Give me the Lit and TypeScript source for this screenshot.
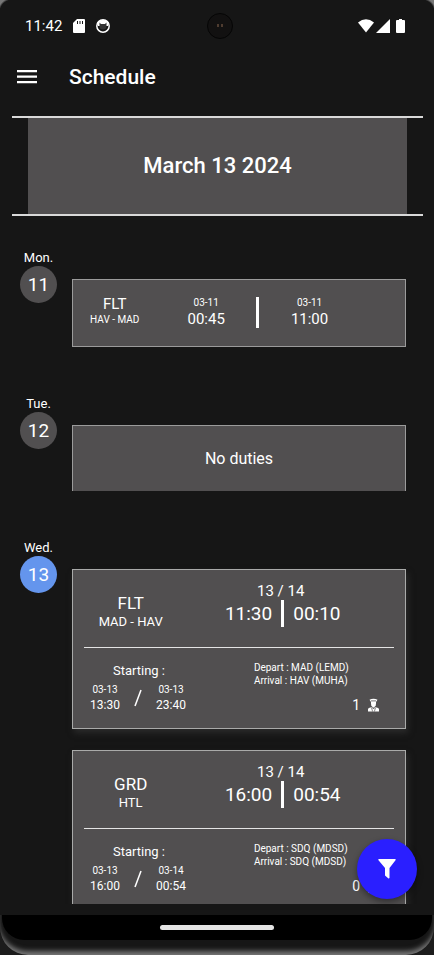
import { LitElement, html, css } from "lit";
import { customElement, property } from "lit/decorators.js";

interface Leg {
  date: string;
  time: string;
}

interface Duty {
  kind: string;
  route: string;
  days: string;
  from: string;
  to: string;
  start: Leg;
  end: Leg;
  depart: string;
  arrival: string;
  crew: number;
}

const DUTIES: Duty[] = [
  {
    kind: "FLT", route: "MAD - HAV", days: "13 / 14", from: "11:30", to: "00:10",
    start: { date: "03-13", time: "13:30" }, end: { date: "03-13", time: "23:40" },
    depart: "MAD (LEMD)", arrival: "HAV (MUHA)", crew: 1,
  },
  {
    kind: "GRD", route: "HTL", days: "13 / 14", from: "16:00", to: "00:54",
    start: { date: "03-13", time: "16:00" }, end: { date: "03-14", time: "00:54" },
    depart: "SDQ (MDSD)", arrival: "SDQ (MDSD)", crew: 0,
  },
];

@customElement("duty-card")
class DutyCard extends LitElement {
  @property({ attribute: false }) duty!: Duty;

  static styles = css`
    :host {
      display: block;
      box-sizing: border-box;
      height: 160px;
      padding: 0 11px;
      background: #514f50;
      border: 1px solid #a9aaa9;
      box-shadow: 2px 4px 6px #2a2a2a;
    }
    .head {
      display: grid;
      grid-template-columns: 94fr 212fr 6fr;
      height: 78px;
      box-sizing: border-box;
      border-bottom: 1px solid #e4e4e4;
      text-align: center;
    }
    .what { padding-top: 23px; }
    .kind { font-size: 17px; line-height: 20px; }
    .route { font-size: 13px; line-height: 18px; }
    .when { padding-top: 12px; }
    .days { font-size: 15px; line-height: 18px; padding-right: 4px; }
    .times {
      display: grid;
      grid-template-columns: 1fr 3px 1fr;
      column-gap: 9px;
      font-size: 19px;
      line-height: 27px;
    }
    .times .from { text-align: right; }
    .times .to { text-align: left; }
    .bar { background: #fff; }
    .body {
      display: grid;
      grid-template-columns: 171fr 141fr;
    }
    .starting {
      width: 110px;
      padding-top: 14px;
      text-align: center;
      font-size: 13px;
      line-height: 18px;
    }
    .legs { display: flex; gap: 12px; padding: 3px 0 0 5px; align-items: center; }
    .leg { width: 32px; text-align: center; font-size: 12px; line-height: 16px; }
    .leg small { display: block; font-size: 10px; line-height: 14px; }
    .slash { width: 10px; height: 20px; }
    .ports { padding-top: 13px; font-size: 10px; line-height: 13px; }
    .crew {
      display: flex;
      justify-content: flex-end;
      align-items: center;
      gap: 7px;
      padding: 9px 14px 0 0;
      font-size: 14px;
      line-height: 18px;
    }
  `;

  private leg(leg: Leg) {
    return html`<div class="leg"><small>${leg.date}</small>${leg.time}</div>`;
  }

  render() {
    const d = this.duty;
    return html`
      <div class="head">
        <div class="what">
          <div class="kind">${d.kind}</div>
          <div class="route">${d.route}</div>
        </div>
        <div class="when">
          <div class="days">${d.days}</div>
          <div class="times">
            <span class="from">${d.from}</span><span class="bar"></span><span class="to">${d.to}</span>
          </div>
        </div>
      </div>
      <div class="body">
        <div>
          <div class="starting">Starting :</div>
          <div class="legs">
            ${this.leg(d.start)}
            <svg class="slash" viewBox="0 0 10 20"><path d="M2 18 8 2" stroke="#fff" stroke-width="1.5" /></svg>
            ${this.leg(d.end)}
          </div>
        </div>
        <div>
          <div class="ports">Depart : ${d.depart}<br />Arrival : ${d.arrival}</div>
          <div class="crew">
            <span>${d.crew}</span>
            <svg width="13" height="14" viewBox="0 0 13 14" fill="#fff" aria-label="crew">
              <path d="M2.500 1.800Q6.500-.2 10.500 1.800L9 4Q9.300 8 7.700 8.500V9.500H5.300V8.500Q3.700 8 4 4Z" />
              <path d="M4 2.900h5" stroke="#514f50" stroke-width=".8" />
              <path d="M1 13.500V11Q1 9.800 4.300 9.300L6.500 11l2.200-1.700Q12 9.800 12 11v2.500Z" />
              <path d="M4.600 10 5.600 13.500M8.400 10 7.400 13.500" stroke="#514f50" stroke-width=".7" />
            </svg>
          </div>
        </div>
      </div>
    `;
  }
}

@customElement("day-row")
class DayRow extends LitElement {
  @property() name = "";
  @property() day = "";
  @property({ type: Boolean }) today = false;

  static styles = css`
    :host { display: flex; gap: 15px; }
    .day { width: 37px; text-align: center; flex: none; }
    .name { font-size: 13px; line-height: 16px; white-space: nowrap; }
    .num {
      height: 37px;
      border-radius: 50%;
      background: #514f50;
      font-size: 19px;
      line-height: 37px;
    }
    .today { background: #6495ed; }
    .cards {
      flex: 1;
      display: flex;
      flex-direction: column;
      gap: 21px;
      padding-top: 29px;
    }
  `;

  render() {
    return html`
      <div class="day">
        <div class="name">${this.name}</div>
        <div class="num ${this.today ? "today" : ""}">${this.day}</div>
      </div>
      <div class="cards"><slot></slot></div>
    `;
  }
}

@customElement("app-root")
class AppRoot extends LitElement {
  static styles = css`
    :host {
      display: flex;
      flex-direction: column;
      height: 100vh;
      box-sizing: border-box;
      position: relative;
      overflow: hidden;
      background: #161616;
      color: #fff;
      font-family: Roboto, sans-serif;
    }
    .status {
      display: grid;
      grid-template-columns: 182fr 26px 173fr;
      align-items: center;
      height: 51px;
      flex: none;
      padding: 0 28px 0 25px;
      font-size: 15px;
      background:
        radial-gradient(circle at 100% 100%, transparent 12px, #777 14px) 0 0 / 12px 12px no-repeat,
        radial-gradient(circle at 0 100%, transparent 12px, #777 14px) 100% 0 / 12px 12px no-repeat;
    }
    .left, .right { display: flex; align-items: center; }
    .left { gap: 11px; }
    .right { justify-content: flex-end; gap: 2px; }
    .camera {
      display: flex;
      align-items: center;
      justify-content: center;
      gap: 2px;
      box-sizing: border-box;
      width: 26px;
      height: 26px;
      border: 1px solid #050505;
      border-radius: 50%;
      background: #121111;
    }
    .camera i { width: 2px; height: 3px; background: #4e3c30; }
    .bar { display: flex; align-items: center; gap: 31px; height: 52px; padding: 0 16px; flex: none; }
    .bar h1 { margin: 0; font-size: 21px; font-weight: 500; line-height: 24px; }
    .menu { border: 0; padding: 0; background: none; width: 22px; height: 24px; display: flex; align-items: center; }
    .date {
      flex: none;
      margin: 13px 11px 0 12px;
      padding: 0 16px;
      border: solid #d9d9d9;
      border-width: 2px 0;
    }
    .date h2 {
      margin: 0;
      background: #514f50;
      text-align: center;
      font-size: 22px;
      font-weight: 500;
      line-height: 96px;
    }
    .list {
      flex: 1;
      min-height: 0;
      overflow-y: auto;
      scrollbar-width: none;
      display: flex;
      flex-direction: column;
      gap: 49px;
      padding: 34px 28px 0 20px;
    }
    .card {
      box-sizing: border-box;
      background: #514f50;
      border: 1px solid #9b9b9b;
      text-align: center;
    }
    .brief {
      display: grid;
      grid-template-columns: 84fr 100fr 4fr 100fr 46fr;
      align-items: center;
      height: 68px;
      padding-bottom: 2px;
      font-size: 15px;
      line-height: 18px;
    }
    .brief small { display: block; font-size: 10px; line-height: 14px; }
    .what { padding-bottom: 2px; }
    .tick { width: 3px; height: 31px; background: #fff; }
    .none { height: 66px; border-bottom: 0; font-size: 16px; line-height: 66px; }
    .fab {
      position: absolute;
      right: 17px;
      bottom: 56px;
      width: 60px;
      height: 60px;
      padding: 0;
      border: 0;
      border-radius: 50%;
      background: #2a1fff;
      box-shadow: 0 3px 6px rgba(0, 0, 0, .4);
      display: flex;
      align-items: center;
      justify-content: center;
    }
    .foot { flex: none; margin-top: 11px; background: #1c1c1c; }
    .frame {
      padding: 0 2px 15px;
      background: #161616;
      border-radius: 0 0 28px 28px;
      box-shadow: inset 0 -6px 5px -2px #777;
    }
    .nav {
      display: flex;
      justify-content: center;
      align-items: center;
      height: 25px;
      background: #000;
      border-radius: 0 0 22px 22px;
    }
    .pill { width: 114px; height: 5px; border-radius: 3px; background: #e4e4e4; }
  `;

  render() {
    return html`
      <div class="status">
        <div class="left">
          <span>11:42</span>
          <svg width="12" height="14" viewBox="0 0 12 14">
            <path d="M4 0h7q1 0 1 1v12q0 1-1 1H1q-1 0-1-1V4Z" fill="#fff" />
            <path d="M4.500 2v3M7 2v3M9.500 2v3" stroke="#161616" stroke-width="1" />
          </svg>
          <svg width="14" height="14" viewBox="0 0 14 14">
            <circle cx="7" cy="7" r="6.200" fill="none" stroke="#fff" stroke-width="1.500" />
            <path d="M1 4Q3 1 7 1t6 3l-1 3H2Z" fill="#fff" />
            <path d="M3.500 3.500 5 5h4l1.500-1.500V8Q10 10.500 7 10.500T3.500 8Z" fill="#333" />
          </svg>
        </div>
        <div class="camera"><i></i><i></i></div>
        <div class="right">
          <svg width="16" height="14" viewBox="0 0 16 14"><path d="M0 3.500Q8-3 16 3.500L8 13.500Z" fill="#fff" /></svg>
          <svg width="14" height="14" viewBox="0 0 14 14"><path d="M14 0v14H0Z" fill="#fff" /></svg>
          <svg width="14" height="14" viewBox="0 0 14 14"><path d="M7 0h3v1h2q1 0 1 1v11q0 1-1 1H5q-1 0-1-1V2q0-1 1-1h2Z" fill="#fff" /></svg>
        </div>
      </div>
      <header class="bar">
        <button class="menu" aria-label="Menu">
          <svg width="21" height="14" viewBox="0 0 21 14" fill="#fff">
            <path d="M1 0h20v2.300H1ZM1 5.500h20V7.800H1ZM1 11h20v2.300H1Z" />
          </svg>
        </button>
        <h1>Schedule</h1>
      </header>
      <div class="date"><h2>March 13 2024</h2></div>
      <main class="list">
        <day-row name="Mon." day="11">
          <div class="card brief">
            <div class="what">FLT<small>HAV - MAD</small></div>
            <div><small>03-11</small>00:45</div>
            <span class="tick"></span>
            <div><small>03-11</small>11:00</div>
          </div>
        </day-row>
        <day-row name="Tue." day="12">
          <div class="card none">No duties</div>
        </day-row>
        <day-row name="Wed." day="13" today>
          ${DUTIES.map((d) => html`<duty-card .duty=${d}></duty-card>`)}
        </day-row>
      </main>
      <footer class="foot"><div class="frame"><div class="nav"><div class="pill"></div></div></div></footer>
      <button class="fab" aria-label="Filter">
        <svg width="18" height="20" viewBox="0 0 18 20">
          <path d="M1 0h16q1.200.3.500 1.300L11.500 9v10q-.5.800-1.300.3L7 16.500V9L.500 1.300Q-.2.300 1 0Z" fill="#fff" />
        </svg>
      </button>
    `;
  }
}
